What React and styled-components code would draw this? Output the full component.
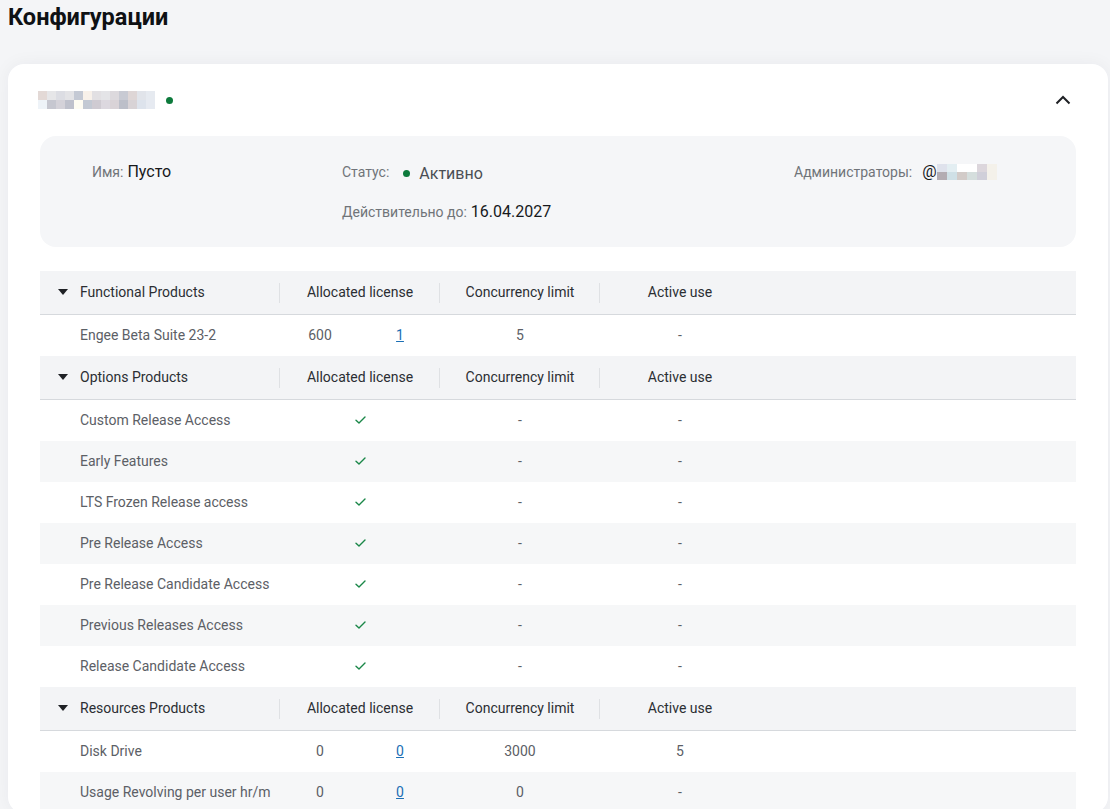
import React from 'react';
import styled, { createGlobalStyle } from 'styled-components';

const GlobalStyle = createGlobalStyle`
  html, body {
    margin: 0;
    padding: 0;
    background: #f4f5f7;
    font-family: Roboto, "Noto Sans", "Liberation Sans", sans-serif;
    color: #1f2125;
  }
`;

const nameCells = [
  ['#e3d9d6', '#e6e6e8', '#dcdde3', '#e3e3e6', '#c4c9d4', '#f8f1ea', '#e2e0e3', '#e4e4e7', '#dcd9dd', '#c8cad3', '#ded6d6', '#e1e4ea', '#e6eaf0'],
  ['#eef3f8', '#c6c7d0', '#d4d2d9', '#bfc1cc', '#fefcf2', '#c3c9d3', '#cfcbd2', '#dcd8df', '#d9d3d7', '#bcbfc9', '#d8d3d6', '#dde3ec', '#e6eaf1'],
];

const adminCells = [
  ['#dfe2ec', '#e3eef2', '#ffffff', '#ffffff', '#dcd6dc', '#f4f1ea'],
  ['#b3acb2', '#cfe0e6', '#d2cbc8', '#d5dedd', '#d0cfd9', '#f4f1ea'],
];

const groups = [
  {
    title: 'Functional Products',
    rows: [
      { name: 'Engee Beta Suite 23-2', alloc: '600', link: '1', limit: '5', active: '-' },
    ],
  },
  {
    title: 'Options Products',
    rows: [
      'Custom Release Access',
      'Early Features',
      'LTS Frozen Release access',
      'Pre Release Access',
      'Pre Release Candidate Access',
      'Previous Releases Access',
      'Release Candidate Access',
    ].map((name) => ({ name, check: true, limit: '-', active: '-' })),
  },
  {
    title: 'Resources Products',
    rows: [
      { name: 'Disk Drive', alloc: '0', link: '0', limit: '3000', active: '5' },
      { name: 'Usage Revolving per user hr/m', alloc: '0', link: '0', limit: '0', active: '-' },
    ],
  },
];

const Mosaic = ({ cells, size }) => (
  <MosaicGrid $cols={cells[0].length} $size={size}>
    {cells.flat().map((c, i) => (
      <MosaicCell key={i} style={{ background: c }} />
    ))}
  </MosaicGrid>
);

const Check = () => (
  <svg width="11" height="8" viewBox="0 0 11 8" fill="none">
    <path d="M1 4.2 L4 7 L10 1" stroke="#1a8748" strokeWidth="1.4" strokeLinecap="round" strokeLinejoin="round" />
  </svg>
);

const Caret = () => (
  <svg width="10" height="6" viewBox="0 0 10 6">
    <path d="M0 0 H10 L5 6 Z" fill="#1f2125" />
  </svg>
);

const ChevronUp = () => (
  <svg width="16" height="10" viewBox="0 0 16 10" fill="none">
    <path d="M1.5 8.5 L8 2 L14.5 8.5" stroke="#1f2125" strokeWidth="2" />
  </svg>
);

const App = () => (
  <>
    <GlobalStyle />
    <Page>
      <Title>Конфигурации</Title>
      <Card>
        <CardHeader>
          <NameRow>
            <Mosaic cells={nameCells} size={[9, 9]} />
            <Dot $size={7} />
          </NameRow>
          <ChevronUp />
        </CardHeader>

        <InfoPanel>
          <InfoColumn>
            <Field>
              <Label>Имя:</Label>
              <Value>Пусто</Value>
            </Field>
          </InfoColumn>
          <InfoColumn>
            <Field>
              <Label>Статус:</Label>
              <Status>
                <Dot $size={7} />
                Активно
              </Status>
            </Field>
            <Field>
              <Label>Действительно до:</Label>
              <Value>16.04.2027</Value>
            </Field>
          </InfoColumn>
          <InfoColumn>
            <Field>
              <Label>Администраторы:</Label>
              <Admin>
                @
                <Mosaic cells={adminCells} size={[10, 8]} />
              </Admin>
            </Field>
          </InfoColumn>
        </InfoPanel>

        <Table>
          {groups.map((g) => (
            <Group key={g.title}>
              <HeadRow>
                <HeadCell $divider $left>
                  <Caret />
                  {g.title}
                </HeadCell>
                <HeadCell $divider>Allocated license</HeadCell>
                <HeadCell $divider>Concurrency limit</HeadCell>
                <HeadCell>Active use</HeadCell>
              </HeadRow>
              {g.rows.map((r) => (
                <Row key={r.name}>
                  <NameCell>{r.name}</NameCell>
                  {r.check ? (
                    <Cell>
                      <Check />
                    </Cell>
                  ) : (
                    <SplitCell>
                      <span>{r.alloc}</span>
                      <Link href="#">{r.link}</Link>
                    </SplitCell>
                  )}
                  <Cell>{r.limit}</Cell>
                  <Cell>{r.active}</Cell>
                </Row>
              ))}
            </Group>
          ))}
        </Table>
      </Card>
    </Page>
  </>
);

const Page = styled.div`
  padding: 3px 2px 0 8px;
`;

const Title = styled.h1`
  margin: 0;
  font-size: 23.5px;
  line-height: 28px;
  font-weight: 700;
  color: #0f1114;
`;

const Card = styled.div`
  margin-top: 33px;
  background: #ffffff;
  border-radius: 16px;
  box-shadow: 0 0 18px rgba(20, 30, 50, 0.05);
  padding: 24px 32px 0;
`;

const CardHeader = styled.div`
  display: flex;
  align-items: center;
  justify-content: space-between;
  height: 24px;
  padding-right: 5px;
`;

const NameRow = styled.div`
  display: flex;
  align-items: center;
  gap: 11px;
  margin-left: -2px;
`;

const MosaicGrid = styled.div`
  display: grid;
  grid-template-columns: repeat(${(p) => p.$cols}, ${(p) => p.$size[0]}px);
  grid-auto-rows: ${(p) => p.$size[1]}px;
`;

const MosaicCell = styled.span`
  display: block;
`;

const Dot = styled.span`
  display: inline-block;
  width: ${(p) => p.$size}px;
  height: ${(p) => p.$size}px;
  border-radius: 50%;
  background: #0d7a3c;
  flex-shrink: 0;
`;

const InfoPanel = styled.div`
  margin-top: 24px;
  background: #f5f6f8;
  border-radius: 16px;
  padding: 24px 52px 23px;
  display: grid;
  grid-template-columns: 250px 452px 1fr;
`;

const InfoColumn = styled.div`
  display: flex;
  flex-direction: column;
  gap: 14px;
`;

const Field = styled.div`
  display: flex;
  align-items: baseline;
  gap: 4px;
  line-height: 24px;
`;

const Label = styled.span`
  font-size: 14px;
  color: #707479;
`;

const Value = styled.span`
  font-size: 16px;
  color: #17191c;
`;

const Status = styled.span`
  display: inline-flex;
  align-items: center;
  gap: 9px;
  margin-left: 10px;
  font-size: 16px;
  color: #4a4e54;
`;

const Admin = styled.span`
  display: inline-flex;
  align-items: center;
  margin-left: 6px;
  font-size: 16px;
  color: #17191c;
`;

const Table = styled.div`
  margin-top: 24px;
  display: flex;
  flex-direction: column;
`;

const Group = styled.div`
  display: flex;
  flex-direction: column;
  & > div:nth-child(odd):not(:first-child) {
    background: #f6f7f8;
  }
`;

const columns = `240px 160px 160px 160px 1fr`;

const HeadRow = styled.div`
  display: grid;
  grid-template-columns: ${columns};
  height: 43px;
  background: #f3f4f6;
  border-bottom: 1px solid #d6d9dd;
`;

const HeadCell = styled.div`
  position: relative;
  display: flex;
  align-items: center;
  justify-content: ${(p) => (p.$left ? 'flex-start' : 'center')};
  gap: 12px;
  padding-left: ${(p) => (p.$left ? '18px' : '0')};
  font-size: 14px;
  color: #2b2e33;
  &::after {
    content: '';
    display: ${(p) => (p.$divider ? 'block' : 'none')};
    position: absolute;
    right: 0;
    top: 12px;
    bottom: 11px;
    width: 1px;
    background: #dfe1e4;
  }
`;

const Row = styled.div`
  display: grid;
  grid-template-columns: ${columns};
  height: 41px;
  background: #ffffff;
  font-size: 14px;
  color: #5c6066;
`;

const NameCell = styled.div`
  display: flex;
  align-items: center;
  padding-left: 40px;
  white-space: nowrap;
`;

const Cell = styled.div`
  display: flex;
  align-items: center;
  justify-content: center;
`;

const SplitCell = styled.div`
  display: grid;
  grid-template-columns: 1fr 1fr;
  align-items: center;
  justify-items: center;
`;

const Link = styled.a`
  color: #1b6fb5;
  text-decoration: underline;
`;

export default App;
